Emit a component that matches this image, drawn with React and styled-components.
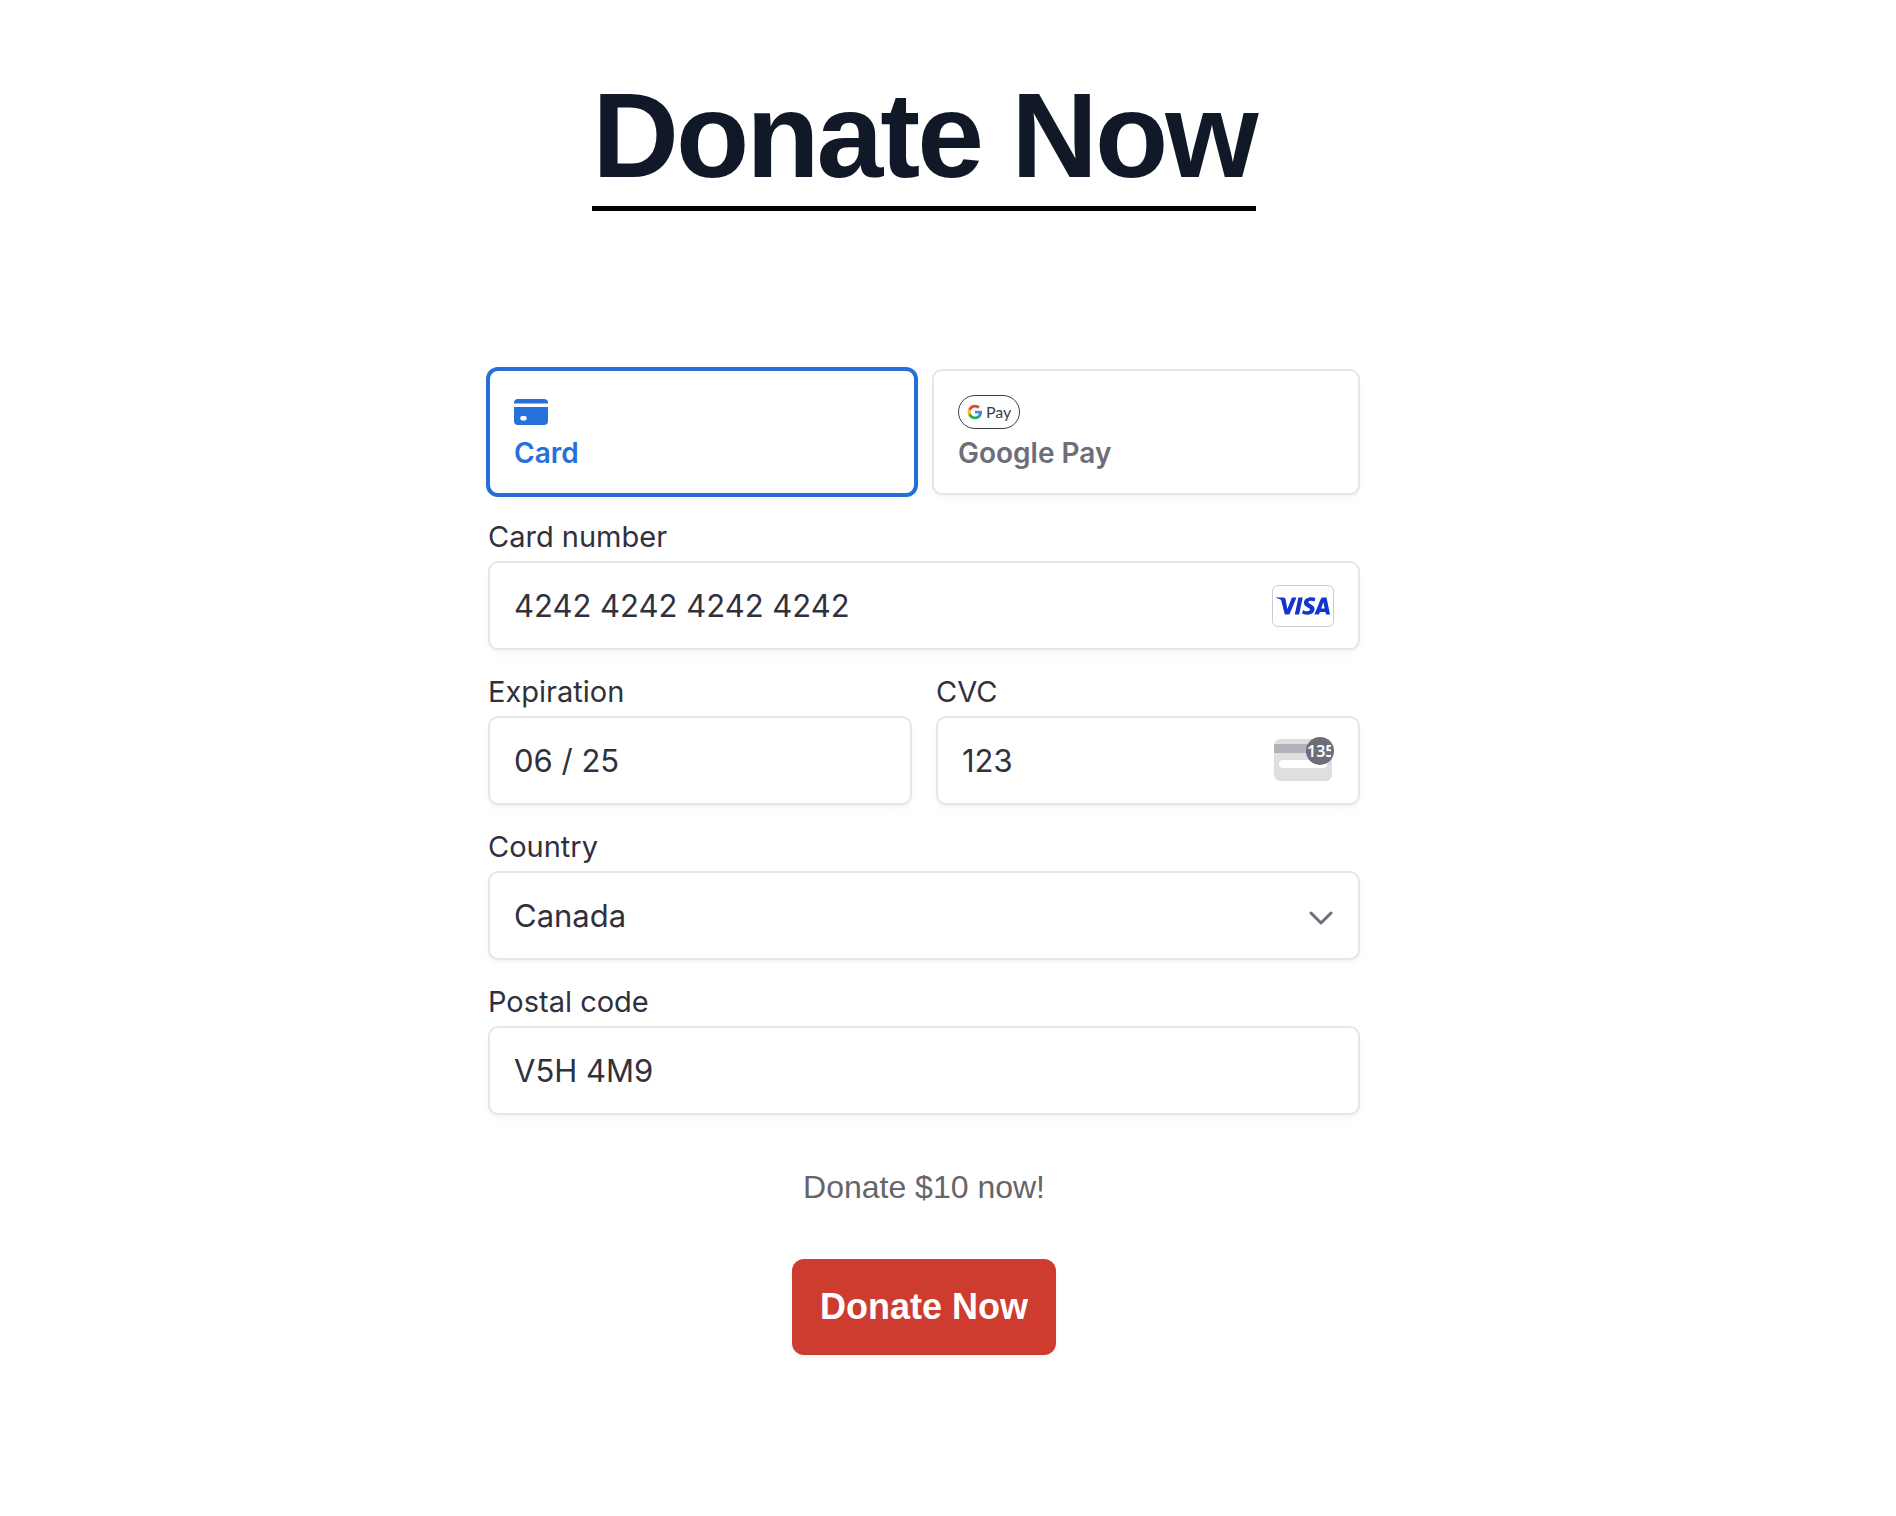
import React, { useState } from 'react'
import styled, { createGlobalStyle } from 'styled-components'
import { SiVisa } from 'react-icons/si'

const CardIcon = () => (
    <svg width="34" height="26" viewBox="0 0 34 26" fill="currentColor" aria-hidden="true">
        <path d="M4 0h26a4 4 0 0 1 4 4v0.5H0V4a4 4 0 0 1 4-4z" />
        <path fillRule="evenodd" d="M0 8h34v14a4 4 0 0 1-4 4H4a4 4 0 0 1-4-4V8zm8.5 9h2a2.3 2.3 0 0 1 0 4.6h-2a2.3 2.3 0 0 1 0-4.6z" />
    </svg>
)

const GoogleG = () => (
    <svg width="16" height="16" viewBox="0 0 24 24" aria-hidden="true">
        <path fill="#4285F4" d="M22.56 12.25c0-.78-.07-1.53-.2-2.25H12v4.26h5.92c-.26 1.37-1.04 2.53-2.21 3.31v2.77h3.57c2.08-1.92 3.28-4.74 3.28-8.09z" />
        <path fill="#34A853" d="M12 23c2.97 0 5.46-.98 7.28-2.66l-3.57-2.77c-.98.66-2.23 1.06-3.71 1.06-2.86 0-5.29-1.93-6.16-4.53H2.18v2.84C3.99 20.53 7.7 23 12 23z" />
        <path fill="#FBBC05" d="M5.84 14.09c-.22-.66-.35-1.36-.35-2.09s.13-1.43.35-2.09V7.07H2.18C1.43 8.55 1 10.22 1 12s.43 3.45 1.18 4.93l2.85-2.22.81-.62z" />
        <path fill="#EA4335" d="M12 5.38c1.62 0 3.06.56 4.21 1.64l3.15-3.15C17.45 2.09 14.97 1 12 1 7.7 1 3.99 3.47 2.18 7.07l3.66 2.84c.87-2.6 3.3-4.53 6.16-4.53z" />
    </svg>
)

const CvcIcon = () => (
    <svg width="60" height="48" viewBox="0 0 60 48" aria-hidden="true">
        <rect x="0" y="2" width="58" height="42" rx="6" fill="#dfdfe2" />
        <rect x="0" y="7" width="58" height="9" fill="#b2b2b8" />
        <rect x="5" y="23" width="48" height="8" rx="4" fill="#fff" />
        <circle cx="46" cy="14" r="14" fill="#6d6e78" />
        <svg x="32" y="0" width="25" height="28">
            <text x="1" y="20" fill="#fff" fontFamily="'Noto Sans', sans-serif" fontWeight="600" fontSize="16">135</text>
        </svg>
    </svg>
)

const ChevronIcon = () => (
    <svg width="25" height="18" viewBox="0 0 25 18" fill="none" stroke="#6d6e78" strokeWidth="3" strokeLinecap="round" strokeLinejoin="round" aria-hidden="true">
        <path d="M2 6l10 10L22 6" />
    </svg>
)

const App = () => {
    const [method, setMethod] = useState('card')

    return (
        <>
            <GlobalStyle />
            <Container>
                <Title>Donate Now</Title>
                <Form onSubmit={(e) => e.preventDefault()}>
                    <Methods>
                        <Method type="button" $active={method === 'card'} aria-pressed={method === 'card'} onClick={() => setMethod('card')}>
                            <MethodIcon><CardIcon /></MethodIcon>
                            Card
                        </Method>
                        <Method type="button" $active={method === 'google'} aria-pressed={method === 'google'} onClick={() => setMethod('google')}>
                            <MethodIcon>
                                <GooglePayMark><GoogleG />Pay</GooglePayMark>
                            </MethodIcon>
                            Google Pay
                        </Method>
                    </Methods>
                    <Field>
                        <Label htmlFor="number">Card number</Label>
                        <Control>
                            <Input id="number" inputMode="numeric" defaultValue="4242 4242 4242 4242" />
                            <Adornment>
                                <VisaBadge><SiVisa size={54} aria-label="Visa" /></VisaBadge>
                            </Adornment>
                        </Control>
                    </Field>
                    <Row>
                        <Field>
                            <Label htmlFor="expiry">Expiration</Label>
                            <Control>
                                <Input id="expiry" inputMode="numeric" defaultValue="06 / 25" />
                            </Control>
                        </Field>
                        <Field>
                            <Label htmlFor="cvc">CVC</Label>
                            <Control>
                                <Input id="cvc" inputMode="numeric" defaultValue="123" />
                                <Adornment><CvcIcon /></Adornment>
                            </Control>
                        </Field>
                    </Row>
                    <Field>
                        <Label htmlFor="country">Country</Label>
                        <Control>
                            <Select id="country" defaultValue="CA">
                                <option value="CA">Canada</option>
                            </Select>
                            <Adornment><ChevronIcon /></Adornment>
                        </Control>
                    </Field>
                    <Field>
                        <Label htmlFor="postal">Postal code</Label>
                        <Control>
                            <Input id="postal" defaultValue="V5H 4M9" />
                        </Control>
                    </Field>
                    <Note>Donate $10 now!</Note>
                    <Submit type="submit">Donate Now</Submit>
                </Form>
            </Container>
        </>
    )
}

export default App

const GlobalStyle = createGlobalStyle`
    *, *::before, *::after {
        box-sizing: border-box;
    }
    body {
        margin: 0;
        background-color: #fff;
        font-family: "Liberation Sans", Arial, sans-serif;
    }
`

const Container = styled.main`
    display: flex;
    flex-direction: column;
    align-items: center;
    padding: 75px 72px 80px 24px;
`

const Title = styled.h1`
    margin: 0 0 158px;
    padding-bottom: 11px;
    border-bottom: 5px solid #000;
    color: #111827;
    font-size: 120px;
    font-weight: 700;
    line-height: 120px;
    letter-spacing: -3px;
`

const Form = styled.form`
    display: flex;
    flex-direction: column;
    width: 100%;
    max-width: 872px;
    font-family: Inter, sans-serif;
`

const Methods = styled.div`
    display: grid;
    grid-template-columns: 1fr 1fr;
    gap: 16px;
`

const Method = styled.button`
    display: flex;
    flex-direction: column;
    align-items: flex-start;
    height: 126px;
    padding: 24px;
    border: 2px solid ${(props) => (props.$active ? '#2770da' : '#e6e6e6')};
    border-radius: 10px;
    background-color: #fff;
    box-shadow: 0 2px 2px rgba(0, 0, 0, 0.03), 0 6px 12px rgba(0, 0, 0, 0.02)${(props) => (props.$active ? ', 0 0 0 2px #2770da' : '')};
    color: ${(props) => (props.$active ? '#2770da' : '#6d6e78')};
    font-family: inherit;
    font-size: 28px;
    font-weight: 600;
    line-height: 32px;
    cursor: pointer;
`

const MethodIcon = styled.span`
    display: flex;
    flex-shrink: 0;
    align-items: center;
    height: 34px;
    margin-bottom: 8px;
`

const GooglePayMark = styled.span`
    display: flex;
    align-items: center;
    gap: 3px;
    height: 34px;
    padding: 0 8px;
    border: 1px solid #3c4043;
    border-radius: 17px;
    color: #3c4043;
    font-family: Lato, sans-serif;
    font-size: 16px;
    font-weight: 400;
`

const Row = styled.div`
    display: grid;
    grid-template-columns: 1fr 1fr;
    gap: 24px;
`

const Field = styled.div`
    display: flex;
    flex-direction: column;
    gap: 6px;
    padding-top: 24px;
`

const Label = styled.label`
    color: #30313d;
    font-size: 29px;
    line-height: 36px;
`

/* control and icon share one cell, so the whole box stays clickable */
const Control = styled.div`
    display: grid;
    align-items: center;
    height: 89px;
    border: 2px solid #e6e6e6;
    border-radius: 10px;
    background-color: #fff;
    box-shadow: 0 2px 2px rgba(0, 0, 0, 0.03), 0 6px 12px rgba(0, 0, 0, 0.02);
`

const Input = styled.input`
    grid-area: 1 / 1;
    width: 100%;
    height: 100%;
    padding: 0 24px;
    border: none;
    border-radius: 8px;
    outline: none;
    background-color: transparent;
    color: #30313d;
    font-family: inherit;
    font-size: 31px;
`

const Select = styled(Input).attrs({ as: 'select' })`
    appearance: none;
`

const Adornment = styled.span`
    grid-area: 1 / 1;
    justify-self: end;
    display: flex;
    margin-right: 24px;
    pointer-events: none;
`

const VisaBadge = styled.span`
    display: flex;
    align-items: center;
    justify-content: center;
    width: 62px;
    height: 42px;
    border: 1px solid #ccc;
    border-radius: 6px;
    color: #1434cb;
`

const Note = styled.p`
    margin: 48px 0;
    color: #666;
    font-family: "Liberation Sans", Arial, sans-serif;
    font-size: 32px;
    line-height: 48px;
    text-align: center;
`

const Submit = styled.button`
    align-self: center;
    height: 96px;
    padding: 0 28px;
    border: none;
    border-radius: 12px;
    background-color: #cd3c2f;
    box-shadow: 0 2px 4px rgba(0, 0, 0, 0.05);
    color: #fff;
    font-family: "Liberation Sans", Arial, sans-serif;
    font-size: 36px;
    font-weight: 700;
    cursor: pointer;
`
